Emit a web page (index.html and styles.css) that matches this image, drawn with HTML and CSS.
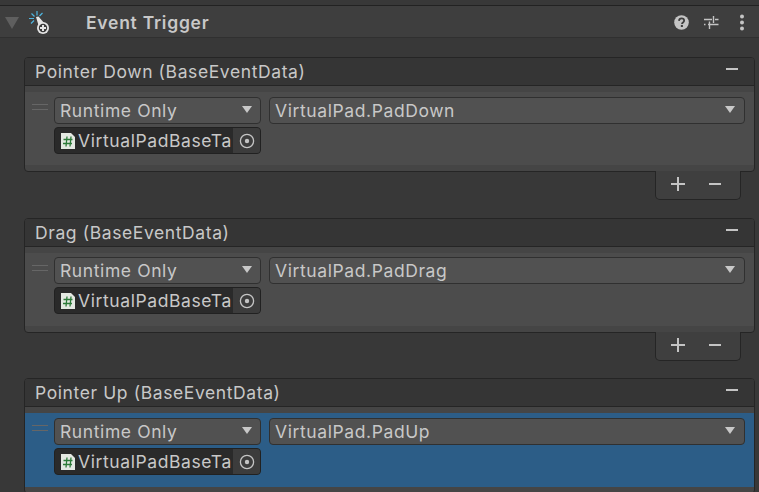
FILE: index.html
```html
<!DOCTYPE html>
<html lang="en">
<head>
<meta charset="utf-8">
<title>Event Trigger</title>
<link rel="stylesheet" href="styles.css">
</head>
<body>
<div class="top-strip"></div>
<header class="comp-header">
  <svg class="foldout" width="14" height="12" viewBox="0 0 14 12"><path d="M0 0h14L7 12z" fill="#5f5f5f"/></svg>
  <svg class="comp-icon" width="26" height="26" viewBox="0 0 26 26">
    <g stroke="#4fb6e0" stroke-width="1.2" fill="none">
      <path d="M9 1v4.500M3.500 3.500l3 3M14.500 3l-3 3M1 8.500h5M3 13.500l3-3"/>
    </g>
    <path d="M8 7l2.500-.5 6 7-5 5z" fill="#e4e4e4"/>
    <circle cx="15" cy="18" r="6" fill="#e4e4e4"/>
    <circle cx="15" cy="18" r="4.200" fill="#3a3a3a"/>
    <path d="M12 18h6M15 15v6" stroke="#e4e4e4" stroke-width="2"/>
  </svg>
  <h1 class="comp-title">Event Trigger</h1>
  <div class="comp-tools">
    <svg class="tool-help" width="15" height="15" viewBox="0 0 16 16"><circle cx="8" cy="8" r="7.800" fill="#c4c4c4"/><path d="M5.300 6.200C5.500 4.500 6.700 3.700 8 3.700c1.600 0 2.800 1 2.800 2.400 0 1.900-2.300 1.900-2.300 3.600" fill="none" stroke="#3e3e3e" stroke-width="1.900"/><rect x="7.300" y="10.600" width="2.200" height="2.200" fill="#3e3e3e"/></svg>
    <svg class="tool-slide" width="15" height="15" viewBox="0 0 15 15"><path d="M0 4.500h8M11 4.500h3.500M0 9.500h1.500M4 9.500h10.500M9.500 1v7M5.500 6.500v7.500" stroke="#c4c4c4" stroke-width="1.400" fill="none"/></svg>
    <svg width="6" height="17" viewBox="0 0 6 17"><g fill="#c4c4c4"><circle cx="3" cy="2.500" r="2"/><circle cx="3" cy="8.500" r="2"/><circle cx="3" cy="14.500" r="2"/></g></svg>
  </div>
</header>

<section class="event first">
  <div class="event-head"><span>Pointer Down (BaseEventData)</span><i class="minus"></i></div>
  <div class="event-body">
    <div class="row">
      <div class="grip"></div>
      <div class="fields">
        <div class="drop"><span>Runtime Only</span><b class="arrow"></b></div>
        <div class="drop"><span>VirtualPad.PadDown</span><b class="arrow"></b></div>
        <div class="obj">
          <svg class="cs" width="14" height="16" viewBox="0 0 14 16"><path d="M0 0h10l4 4v12H0z" fill="#e4e8e2"/><path d="M6 3.500l-1 10M10 3.500l-1 10M2.500 6.500h9M2 10.500h9" stroke="#2c7a38" stroke-width="1.300" fill="none"/></svg>
          <span class="obj-name">VirtualPadBaseTa</span>
          <div class="picker"><svg width="16" height="16" viewBox="0 0 16 16"><circle cx="8" cy="8" r="6.600" fill="none" stroke="#c4c4c4" stroke-width="1.300"/><circle cx="8" cy="8" r="2.200" fill="#c4c4c4"/></svg></div>
        </div>
      </div>
    </div>
  </div>
</section>
<div class="footer"><i class="plus"></i><i class="minus"></i></div>

<section class="event">
  <div class="event-head"><span>Drag (BaseEventData)</span><i class="minus"></i></div>
  <div class="event-body">
    <div class="row tight">
      <div class="grip"></div>
      <div class="fields">
        <div class="drop"><span>Runtime Only</span><b class="arrow"></b></div>
        <div class="drop"><span>VirtualPad.PadDrag</span><b class="arrow"></b></div>
        <div class="obj">
          <svg class="cs" width="14" height="16" viewBox="0 0 14 16"><path d="M0 0h10l4 4v12H0z" fill="#e4e8e2"/><path d="M6 3.500l-1 10M10 3.500l-1 10M2.500 6.500h9M2 10.500h9" stroke="#2c7a38" stroke-width="1.300" fill="none"/></svg>
          <span class="obj-name">VirtualPadBaseTa</span>
          <div class="picker"><svg width="16" height="16" viewBox="0 0 16 16"><circle cx="8" cy="8" r="6.600" fill="none" stroke="#c4c4c4" stroke-width="1.300"/><circle cx="8" cy="8" r="2.200" fill="#c4c4c4"/></svg></div>
        </div>
      </div>
    </div>
  </div>
</section>
<div class="footer"><i class="plus"></i><i class="minus"></i></div>

<section class="event last">
  <div class="event-head"><span>Pointer Up (BaseEventData)</span><i class="minus"></i></div>
  <div class="event-body">
    <div class="row selected">
      <div class="grip"></div>
      <div class="fields">
        <div class="drop"><span>Runtime Only</span><b class="arrow"></b></div>
        <div class="drop"><span>VirtualPad.PadUp</span><b class="arrow"></b></div>
        <div class="obj">
          <svg class="cs" width="14" height="16" viewBox="0 0 14 16"><path d="M0 0h10l4 4v12H0z" fill="#e4e8e2"/><path d="M6 3.500l-1 10M10 3.500l-1 10M2.500 6.500h9M2 10.500h9" stroke="#2c7a38" stroke-width="1.300" fill="none"/></svg>
          <span class="obj-name">VirtualPadBaseTa</span>
          <div class="picker"><svg width="16" height="16" viewBox="0 0 16 16"><circle cx="8" cy="8" r="6.600" fill="none" stroke="#c4c4c4" stroke-width="1.300"/><circle cx="8" cy="8" r="2.200" fill="#c4c4c4"/></svg></div>
        </div>
      </div>
    </div>
  </div>
</section>
</body>
</html>
```
FILE: styles.css
```css
* { box-sizing: border-box; }
html, body { height: 100%; }
body {
  margin: 0;
  height: 492px;
  overflow: hidden;
  background: #383838;
  font-family: Inter, "Liberation Sans", sans-serif;
  font-size: 17.5px;
  color: #c8c8c8;
}
.top-strip { height: 6px; background: #383838; border-bottom: 1px solid #222; }
.comp-header {
  height: 32px;
  display: flex;
  align-items: center;
  background: #3e3e3e;
  border-bottom: 1px solid #303030;
  padding: 2px 14px 0 5px;
}
.foldout { margin-right: 9px; }
.comp-title { margin: 0 0 0 32px; font-size: 17.5px; font-weight: 600; letter-spacing: .75px; color: #c8c8c8; }
.comp-tools { margin-left: auto; display: flex; align-items: center; }
.tool-help { margin-right: 15px; }
.tool-slide { margin-right: 20px; }
.event {
  margin: 18px 4px 0 24px;
  border: 1px solid #252525;
  border-radius: 4px;
  background: #454545;
}
.event.first { margin-top: 19px; }
.event.last { margin-top: 17px; }
.event-head {
  height: 28px;
  display: flex;
  align-items: center;
  justify-content: space-between;
  padding: 0 16px 0 10px;
  background: #353535;
  border-bottom: 1px solid #252525;
  border-radius: 3px 3px 0 0;
  letter-spacing: .6px;
}
.minus { display: block; width: 12px; height: 2px; background: #c4c4c4; }
.event-head .minus { margin-bottom: 5px; }
.event-body { padding: 6px 0; }
.row { display: flex; background: #4c4c4c; height: 73px; }
.row.selected { background: #2c5d87; height: 74px; }
.grip {
  width: 16px;
  height: 6px;
  margin: 12px 0 0 7px;
  border-top: 1px solid #666;
  border-bottom: 1px solid #666;
  flex: none;
}
.fields {
  margin: 5px 9px 0 6px;
  flex: 1;
  display: grid;
  grid-template-columns: 207px 1fr;
  column-gap: 8px;
  row-gap: 3px;
  grid-template-rows: 27px 27px;
}
.row.tight .fields { margin-top: 4px; }
.drop {
  display: flex;
  align-items: center;
  justify-content: space-between;
  padding: 0 8px 0 5px;
  background: #515151;
  border: 1px solid #303030;
  border-radius: 4px;
  letter-spacing: .6px;
}
.drop + .drop { padding-right: 9px; }
.arrow {
  width: 0;
  height: 0;
  margin-bottom: 2px;
  border-left: 5.500px solid transparent;
  border-right: 5.500px solid transparent;
  border-top: 7px solid #c8c8c8;
}
.obj {
  grid-column: 1;
  display: flex;
  align-items: center;
  background: #2a2a2a;
  border: 1px solid #212121;
  border-radius: 4px;
  padding-left: 6px;
  overflow: hidden;
}
.cs { flex: none; margin-right: 3px; }
.obj-name { flex: 1; min-width: 0; white-space: nowrap; overflow: hidden; letter-spacing: .6px; }
.picker {
  flex: none;
  width: 27px;
  height: 100%;
  display: flex;
  align-items: center;
  justify-content: center;
  background: #3c3c3c;
}
.footer {
  width: 86px;
  height: 29px;
  margin: -1px 0 0 655px;
  position: relative;
  display: flex;
  align-items: center;
  gap: 24px;
  padding: 0 0 3px 15px;
  background: #3f3f3f;
  border: 1px solid #252525;
  border-top: 0;
  border-radius: 0 0 5px 5px;
}
.plus {
  display: block;
  width: 14px;
  height: 14px;
  background:
    linear-gradient(#c4c4c4, #c4c4c4) center / 14px 2px no-repeat,
    linear-gradient(#c4c4c4, #c4c4c4) center / 2px 14px no-repeat;
}
```
